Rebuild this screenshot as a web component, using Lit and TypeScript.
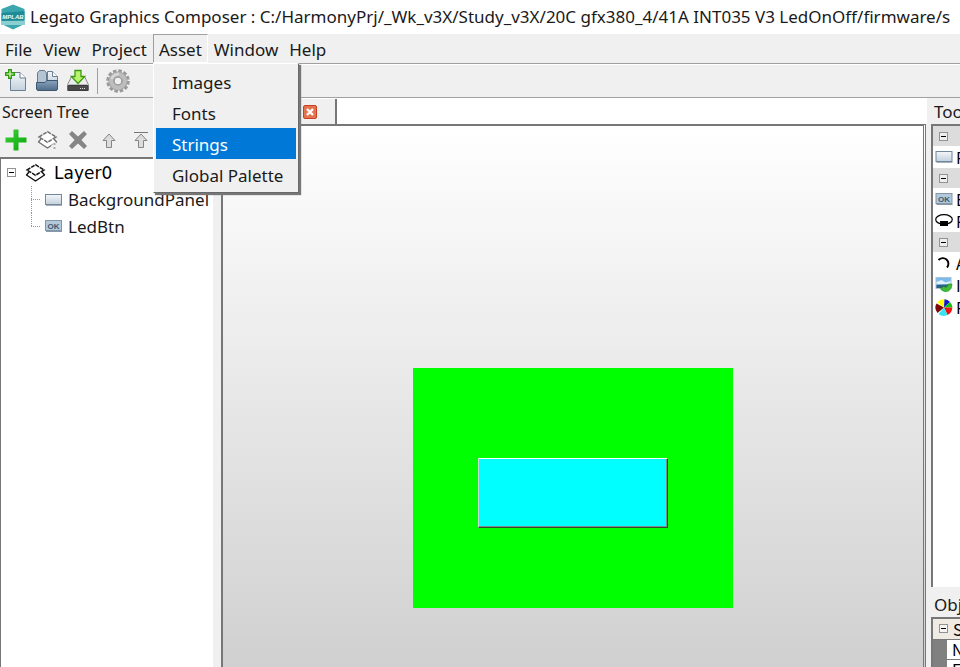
import { LitElement, html, svg, css } from "lit";
import { customElement } from "lit/decorators.js";
import { classMap } from "lit/directives/class-map.js";

const TITLE =
  "Legato Graphics Composer : C:/HarmonyPrj/_Wk_v3X/Study_v3X/20C gfx380_4/41A INT035 V3 LedOnOff/firmware/s";

const icon = (w: number, h: number, body: unknown) =>
  html`<svg width=${w} height=${h} viewBox="0 0 ${w} ${h}" aria-hidden="true">${body}</svg>`;

const defs = svg`
  <defs>
    <linearGradient id="pg" x1="0" y1="0" x2="0" y2="1"><stop offset="0" stop-color="#f4f7fa"/><stop offset="1" stop-color="#c3d0dc"/></linearGradient>
    <linearGradient id="fd" x1="0" y1="0" x2="0" y2="1"><stop offset="0" stop-color="#8aa3bb"/><stop offset="1" stop-color="#4f6c8a"/></linearGradient>
    <linearGradient id="gn" x1="0" y1="0" x2="1" y2="1"><stop offset="0" stop-color="#3fce3a"/><stop offset="1" stop-color="#08a808"/></linearGradient>
  </defs>`;

const newIcon = icon(22, 24, svg`${defs}
  <path d="M5.500 3.500H15L20.500 9V21.500H5.500Z" fill="url(#pg)" stroke="#6b7f92"/>
  <path d="M15 3.500V9H20.500" fill="#fff" stroke="#6b7f92"/>
  <path d="M3.700 .7H6.300V3.700H9.300V6.300H6.300V9.300H3.700V6.300H.7V3.700H3.700Z" fill="#e4ffc4" stroke="#2f9a12" stroke-width="1.400"/>`);

const openIcon = icon(24, 24, svg`${defs}
  <path d="M2.500 20V4L4.500 1.500H9.500L11.500 4V12H22V21H2.500Z" fill="#b4c4d2" stroke="#64798e"/>
  <path d="M12.500 14V2.500H17.500L22.500 7.500V14Z" fill="url(#pg)" stroke="#6b7f92"/>
  <path d="M17.500 2.500V7.500H22.500" fill="#fff" stroke="#6b7f92"/>
  <path d="M1.500 13.500H10L12 11.500H22.500V20L21.500 21.500H2.500L1.500 20Z" fill="url(#fd)" stroke="#3f5872"/>`);

const saveIcon = icon(22, 24, svg`${defs}
  <path d="M4.500 7.500H17.500L21.300 15.500V21.500H.7V15.500Z" fill="#ededed" stroke="#888"/>
  <path d="M1 16.500H21V21.500H1Z" fill="#4a4a4a" stroke="#3c3c3c"/>
  <path d="M2 15.500H20" stroke="#bbb"/><path d="M13 19.500H19" stroke="#ddd" stroke-dasharray="1 1"/>
  <path d="M8 1.500H14V7.500H17.700L11 14.500L4.300 7.500H8Z" fill="#b9f56c" stroke="#3c9a10" stroke-width="1.300"/>`);

const gearIcon = icon(24, 24, svg`
  <circle cx="12" cy="12" r="10" fill="none" stroke="#9a9a9a" stroke-width="3.500" stroke-dasharray="3.400 1.836"/>
  <circle cx="12" cy="12" r="6.800" fill="none" stroke="#989898" stroke-width="5.600"/>
  <circle cx="12" cy="12" r="6.800" fill="none" stroke="#bdbdbd" stroke-width="4.400"/>
  <path d="M5.500 10A7 7 0 0 1 13 5.200" fill="none" stroke="#dcdcdc" stroke-width="2"/>
  <circle cx="12" cy="12" r="3.900" fill="#f0f0f0" stroke="#909090"/>`);

const plusIcon = icon(22, 22, svg`${defs}<path d="M8.500 .5H13.500V8.500H21.500V13.500H13.500V21.500H8.500V13.500H.5V8.500H8.500Z" fill="url(#gn)"/>`);

const layers = (c: string, extra = false) => icon(21, 20, svg`
  <path d="M4 9L1.500 12L10.500 18L19.500 12L17 9" fill="#fff" stroke=${c} stroke-width="1.400" stroke-linejoin="round"/>
  <path d="M10.500 1.700L19 7L10.500 12.300L2 7Z" fill="#fff" stroke=${c} stroke-width="1.500" stroke-dasharray="4 1"/>
  ${extra ? svg`<path d="M17.500 12V20M14.500 16H20.500" stroke="#f0f0f0" stroke-width="3"/><path d="M17.500 13V20" stroke="#aaa" stroke-width="2" stroke-dasharray="2 2"/>` : ""}`);

const crossIcon = icon(20, 20, svg`<path d="M4 1L10 6.600L16 1L19 4L13.400 10L19 16L16 19L10 13.400L4 19L1 16L6.600 10L1 4Z" fill="#858585"/>`);

const upIcon = (bar: boolean) => icon(22, 18, svg`
  ${bar ? svg`<path d="M4 1.500H18" stroke="#777"/>` : ""}
  <path d="M11 3L17 9.500H13.500V16.500H8.500V9.500H5Z" fill="#dcdcdc" stroke="#858585"/>`);

const panelIcon = icon(17, 12, svg`${defs}<rect x=".5" y=".5" width="16" height="10" fill="url(#pg)" stroke="#71879c"/><path d="M1 11.500H17" stroke="#a5b0ba"/>`);

const okIcon = icon(17, 13, svg`<rect x=".5" y=".5" width="16" height="10" fill="#b3c8d9" stroke="#7f96aa"/><path d="M1 11.500H17" stroke="#8b97a3"/>
  <text x="8.500" y="8.500" text-anchor="middle" font-family="Liberation Sans" font-weight="700" font-size="8" fill="#3d5871">OK</text>`);

const roundIcon = icon(18, 14, svg`<ellipse cx="9" cy="5.500" rx="8.300" ry="4.800" fill="#fff" stroke="#000" stroke-width="1.200"/><path d="M5 7H13V12H5Z"/>`);
const arcIcon = icon(17, 16, svg`<path d="M3 5A5.500 5.500 0 1 1 11.500 12.500" fill="none" stroke="#000" stroke-width="1.900"/>`);
const imageIcon = icon(17, 16, svg`<rect x=".5" y=".5" width="15" height="11" fill="#7db9ea" stroke="#a8c3d8"/>
  <path d="M1 5L6 3L10 5.500L15 4V7H1Z" fill="#e3f1fa"/><path d="M1 8L15 7.500V11H1Z" fill="#2c6180"/>
  <path d="M5 12C9 16.500 16 15.500 16.500 7H12.500C12.500 10.500 10 11 8 9.500Z" fill="#43bb35" stroke="#1d8f20" stroke-width=".6"/>`);
const pieIcon = icon(17, 17, svg`
  <path d="M8.500 8.500L1 4.500A8.500 8.500 0 0 0 2 14Z" fill="#7b0c0c"/>
  <path d="M8.500 8.500L1.800 3.500A8.400 8.400 0 0 1 9 .2Z" fill="#ff0"/>
  <path d="M8.500 8.500L9 .2A8.400 8.400 0 0 1 14.500 3Z" fill="#1414c8"/>
  <path d="M8.500 8.500L14.500 3A8.400 8.400 0 0 1 16.800 8.500Z" fill="#12c512"/>
  <path d="M8.500 8.500L16.800 8.500A8.400 8.400 0 0 1 12 16Z" fill="#f21414"/>
  <path d="M8.500 8.500L12 16A8.400 8.400 0 0 1 3 15Z" fill="#36e5f2"/>`);

const closeIcon = icon(14, 14, svg`<rect x=".5" y=".5" width="13" height="13" rx="1.500" fill="#e4744f" stroke="#c8401f"/>
  <path d="M4 4L10 10M10 4L4 10" stroke="#fff" stroke-width="2.400"/>`);

const minusBox = icon(11, 11, svg`<rect x="1.500" y="1.500" width="8" height="8" fill="#fff" fill-opacity=".5" stroke="#929292"/><path d="M3 5.500H8" stroke="#000"/>`);

const logoIcon = icon(26, 26, svg`<path d="M13 .5L24.500 5V20L13 25.500L1.500 20V5Z" fill="#3aa7ae"/>
  <path d="M1.500 9L24.500 7V16L1.500 17Z" fill="#1e8b96"/><path d="M1 17H25V21H1Z" fill="#8ccfd2"/>
  <text x="13" y="15" text-anchor="middle" font-family="Liberation Sans" font-style="italic" font-weight="700" font-size="6" fill="#e8ffff">MPLAB</text>`);

@customElement("app-root")
export class AppRoot extends LitElement {
  static styles = css`
    :host { display: flex; flex-direction: column; height: 100vh; overflow: hidden; background: #f0f0f0;
      color: #1a1a1a; font: 17px/24px "Noto Sans", "Open Sans", sans-serif; }
    * { box-sizing: border-box; }
    svg { display: block; flex: none; }
    button { font: inherit; color: inherit; background: none; border: 0; padding: 0; margin: 0; white-space: nowrap; }
    header, nav, .toolbar, .tools, .row, .tab, .head { display: flex; align-items: center; }
    header { flex: none; height: 34px; gap: 4px; background: #fff; overflow: hidden; white-space: nowrap; }
    h1, h2 { margin: 0; font: inherit; }
    nav { flex: none; height: 30px; gap: 1px; border-bottom: 1px solid #a0a0a0; }
    .entry { position: relative; }
    .entry > button { height: 29px; padding: 2px 5px 0; display: block; }
    .entry > .open { border: 1px solid #fff; border-top-color: #a0a0a0; border-left-color: #a0a0a0; }
    .menu { position: absolute; z-index: 2; left: 0; top: 29px; width: 146px; padding: 2px; background: #f0f0f0;
      border: 1px solid #fff; border-right-color: #696969; border-bottom-color: #696969; box-shadow: 2px 2px 1px #777; }
    .menu button { display: block; width: 140px; height: 31px; padding: 2px 0 0 16px; text-align: left; }
    .menu .on { background: #0078d7; color: #fff; }
    .toolbar { flex: none; height: 34px; border-top: 1px solid #fff; border-bottom: 1px solid #a0a0a0; padding-left: 5px; gap: 8px; }
    .sep { width: 1px; height: 26px; background: #a0a0a0; }
    main { flex: 1; min-height: 0; display: grid; grid-template-columns: 221px 1fr 33px; }
    .left { display: flex; flex-direction: column; min-width: 0; }
    .left h2 { height: 28px; padding-left: 2px; font-size: 16px; line-height: 28px; }
    .tools { height: 31px; padding: 0 0 4px 5px; gap: 10px; }
    .tree { flex: 1; margin: 0 8px 0 0; padding: 0 0 0 5px; list-style: none; background: #fff;
      border-top: 2px solid #777; border-left: 1px solid #777; }
    .tree ul { margin: 0; padding: 0 0 0 25px; list-style: none; }
    .row { height: 27px; gap: 8px; white-space: nowrap; }
    .layer { color: #000; font: 17px/24px "DejaVu Sans", sans-serif; }
    .tree .child { gap: 6px; }
    .tree .child::before { content: ""; width: 9px; height: 27px; flex: none; margin-right: -1px;
      background: linear-gradient(90deg, #999 50%, transparent 50%) 0 13px / 2px 1px repeat-x,
        linear-gradient(#999 50%, transparent 50%) 0 0 / 1px 2px repeat-y; }
    .tree .last::before { height: 14px; align-self: flex-start; }
    .centre { display: flex; flex-direction: column; min-width: 0; }
    .tabs { height: 26px; background: #fff; padding-top: 1px; }
    .tab { width: 116px; height: 25px; background: #f0f0f0; border-right: 2px solid #777; justify-content: flex-end; padding-right: 18px; }
    .scene { flex: 1; min-height: 0; overflow: hidden; display: flex; justify-content: center; align-items: flex-start; padding-top: 242px;
      margin-right: 1px; border: solid #777; border-width: 2px 3px 0 2px; border-right: 3px double #777; background: linear-gradient(#fff, #d0d0d0); }
    .panel { flex: none; position: relative; width: 320px; height: 240px; background: #0f0; }
    .led { position: absolute; left: 65px; top: 90px; width: 190px; height: 70px; background: #0ff;
      border: 1px solid #fff; border-left-color: #c8d8d8; border-right-color: #2d4d2d; border-bottom-color: #2d4d2d; box-shadow: inset -1px -1px #808c8c; }
    .right { display: flex; flex-direction: column; overflow: hidden; white-space: nowrap; }
    .right h2 { height: 26px; flex: none; padding: 2px 0 0 7px; }
    .box { flex: none; height: 463px; margin-left: 4px; background: #fff; border: solid #777; border-width: 2px 0 0 2px;
      color: #000; font: 16px/20px "Noto Sans CJK JP", sans-serif; }
    .item { display: flex; align-items: center; height: 22px; padding-left: 2px; gap: 3px; }
    .item svg { width: 18px; }
    .head { height: 20px; padding-left: 5px; background: #dcdcdc; }
    .right .second { height: 30px; padding-top: 6px; }
    .propbox { flex: 1; overflow: hidden; margin-left: 4px; border: solid #777; border-width: 2px 0 0 2px; background: #fff; }
    table { width: 60px; border-collapse: collapse; table-layout: fixed; color: #000; font: 16px/18px "Noto Sans CJK JP", sans-serif; }
    td, th { height: 20px; padding: 0 0 0 5px; text-align: left; font-weight: 400; border-bottom: 1px solid #777; }
    th { background: #efebe2; }
    .group { display: flex; align-items: center; height: 18px; gap: 4px; }
    .narrow { width: 14px; }
    .gutter { padding: 0; background: #808080; border: 0; }
  `;

  private menus = ["File", "View", "Project", "Asset", "Window", "Help"];
  private assets = ["Images", "Fonts", "Strings", "Global Palette"];

  private item(pic: unknown, name: string) {
    return html`<div class="item">${pic}<span>${name}</span></div>`;
  }

  render() {
    const head = html`<div class="head">${minusBox}</div>`;
    return html`
      <header>${logoIcon}<h1>${TITLE}</h1></header>
      <nav>
        ${this.menus.map((m) => html`<div class="entry">
          <button class=${classMap({ open: m === "Asset" })}>${m}</button>
          ${m === "Asset" ? html`<div class="menu" role="menu">
            ${this.assets.map((a) => html`<button role="menuitem" class=${classMap({ on: a === "Strings" })}>${a}</button>`)}
          </div>` : ""}
        </div>`)}
      </nav>
      <div class="toolbar">
        <button aria-label="New project">${newIcon}</button>
        <button aria-label="Open project">${openIcon}</button>
        <button aria-label="Save project">${saveIcon}</button>
        <span class="sep"></span>
        <button aria-label="Settings">${gearIcon}</button>
      </div>
      <main>
        <section class="left">
          <h2>Screen Tree</h2>
          <div class="tools">
            <button aria-label="Add">${plusIcon}</button>
            <button aria-label="Add layer">${layers("#707070", true)}</button>
            <button aria-label="Delete">${crossIcon}</button>
            <button aria-label="Move up">${upIcon(false)}</button>
            <button aria-label="Move to top">${upIcon(true)}</button>
          </div>
          <ul class="tree">
            <li>
              <div class="row layer">${minusBox}${layers("#111")}<span>Layer0</span></div>
              <ul>
                <li class="row child">${panelIcon}<span>BackgroundPanel</span></li>
                <li class="row child last">${okIcon}<span>LedBtn</span></li>
              </ul>
            </li>
          </ul>
        </section>
        <section class="centre">
          <div class="tabs"><div class="tab"><button aria-label="Close tab">${closeIcon}</button></div></div>
          <div class="scene"><div class="panel"><button class="led" aria-label="LedBtn"></button></div></div>
        </section>
        <aside class="right">
          <h2>Too</h2>
          <div class="box">
            ${head}${this.item(panelIcon, "P")}
            ${head}${this.item(okIcon, "B")}${this.item(roundIcon, "R")}
            ${head}${this.item(arcIcon, "A")}${this.item(imageIcon, "I")}${this.item(pieIcon, "P")}
          </div>
          <h2 class="second">Obj</h2>
          <div class="propbox">
            <table>
              <colgroup><col class="narrow"><col></colgroup>
              <tr><th colspan="2"><span class="group">${minusBox}S</span></th></tr>
              <tr><td class="gutter"></td><td>N</td></tr>
              <tr><td class="gutter"></td><td>E</td></tr>
            </table>
          </div>
        </aside>
      </main>`;
  }
}
